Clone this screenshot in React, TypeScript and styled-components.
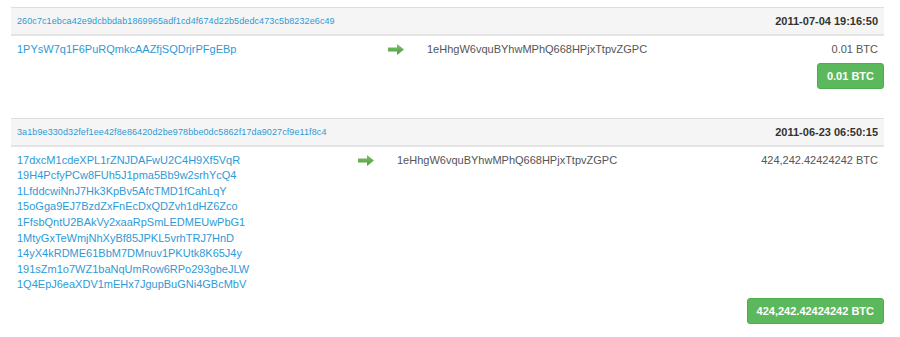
import React from 'react'
import styled, { createGlobalStyle } from 'styled-components'

const GlobalStyle = createGlobalStyle`
  body {
    margin: 0;
    background: #fff;
    font-family: 'Liberation Sans', Arial, Helvetica, sans-serif;
    color: #555;
  }
`

type Tx = {
  hash: string
  time: string
  from: string[]
  to: string
  amount: string
  fromWidth: number
}

const TXS: Tx[] = [
  {
    hash: '260c7c1ebca42e9dcbbdab1869965adf1cd4f674d22b5dedc473c5b8232e6c49',
    time: '2011-07-04 19:16:50',
    from: ['1PYsW7q1F6PuRQmkcAAZfjSQDrjrPFgEBp'],
    to: '1eHhgW6vquBYhwMPhQ668HPjxTtpvZGPC',
    amount: '0.01 BTC',
    fromWidth: 371,
  },
  {
    hash: '3a1b9e330d32fef1ee42f8e86420d2be978bbe0dc5862f17da9027cf9e11f8c4',
    time: '2011-06-23 06:50:15',
    from: [
      '17dxcM1cdeXPL1rZNJDAFwU2C4H9Xf5VqR',
      '19H4PcfyPCw8FUh5J1pma5Bb9w2srhYcQ4',
      '1LfddcwiNnJ7Hk3KpBv5AfcTMD1fCahLqY',
      '15oGga9EJ7BzdZxFnEcDxQDZvh1dHZ6Zco',
      '1FfsbQntU2BAkVy2xaaRpSmLEDMEUwPbG1',
      '1MtyGxTeWmjNhXyBf85JPKL5vrhTRJ7HnD',
      '14yX4kRDME61BbM7DMnuv1PKUtk8K65J4y',
      '191sZm1o7WZ1baNqUmRow6RPo293gbeJLW',
      '1Q4EpJ6eaXDV1mEHx7JgupBuGNi4GBcMbV',
    ],
    to: '1eHhgW6vquBYhwMPhQ668HPjxTtpvZGPC',
    amount: '424,242.42424242 BTC',
    fromWidth: 341,
  },
]

const Page = styled.div`
  width: 873px;
  padding: 7px 0 0 11px;
`

const TxBlock = styled.section`
  margin-bottom: 29px;
`

const Header = styled.div`
  display: flex;
  align-items: center;
  justify-content: space-between;
  height: 26px;
  padding: 0 6px;
  background: #f5f5f5;
  border-top: 1px solid #dedede;
  border-bottom: 2px solid #e4e4e4;
`

const HashLink = styled.a`
  font-size: 9px;
  letter-spacing: 0.1px;
  color: #2e9ad6;
  text-decoration: none;
`

const Time = styled.span`
  font-size: 11px;
  font-weight: bold;
  color: #333;
`

const Row = styled.div<{ $fromWidth: number }>`
  display: grid;
  grid-template-columns: ${(p) => p.$fromWidth}px 39px 1fr auto;
  align-items: start;
  padding: 6px 6px 5px;
  font-size: 11px;
  line-height: 15.6px;
`

const FromList = styled.div`
  display: flex;
  flex-direction: column;
`

const AddrLink = styled.a`
  color: #2e9ad6;
  text-decoration: none;
`

const ArrowCell = styled.div`
  display: flex;
  align-items: center;
  height: 15.6px;
`

const ToAddr = styled.span`
  color: #555;
`

const Amount = styled.span`
  color: #555;
  text-align: right;
`

const Footer = styled.div`
  display: flex;
  justify-content: flex-end;
`

const TotalBadge = styled.span`
  display: inline-block;
  padding: 0 9px;
  height: 24px;
  line-height: 24px;
  font-size: 11px;
  font-weight: bold;
  color: #fff;
  background: #5cb85c;
  border: 1px solid #4cae4c;
  border-radius: 3px;
`

const Arrow = () => (
  <svg width="16" height="11" viewBox="0 0 16 11">
    <defs>
      <linearGradient id="arrowFill" x1="0" y1="0" x2="0" y2="1">
        <stop offset="0" stopColor="#7cc46a" />
        <stop offset="1" stopColor="#4e9a3e" />
      </linearGradient>
    </defs>
    <path d="M0 3.5H9V0L16 5.5L9 11V7.5H0Z" fill="url(#arrowFill)" />
  </svg>
)

const TxTable = ({ tx }: { tx: Tx }) => (
  <TxBlock>
    <Header>
      <HashLink href="#">{tx.hash}</HashLink>
      <Time>{tx.time}</Time>
    </Header>
    <Row $fromWidth={tx.fromWidth}>
      <FromList>
        {tx.from.map((a) => (
          <AddrLink key={a} href="#">
            {a}
          </AddrLink>
        ))}
      </FromList>
      <ArrowCell>
        <Arrow />
      </ArrowCell>
      <ToAddr>{tx.to}</ToAddr>
      <Amount>{tx.amount}</Amount>
    </Row>
    <Footer>
      <TotalBadge>{tx.amount}</TotalBadge>
    </Footer>
  </TxBlock>
)

export default function App() {
  return (
    <>
      <GlobalStyle />
      <Page>
        {TXS.map((tx) => (
          <TxTable key={tx.hash} tx={tx} />
        ))}
      </Page>
    </>
  )
}
